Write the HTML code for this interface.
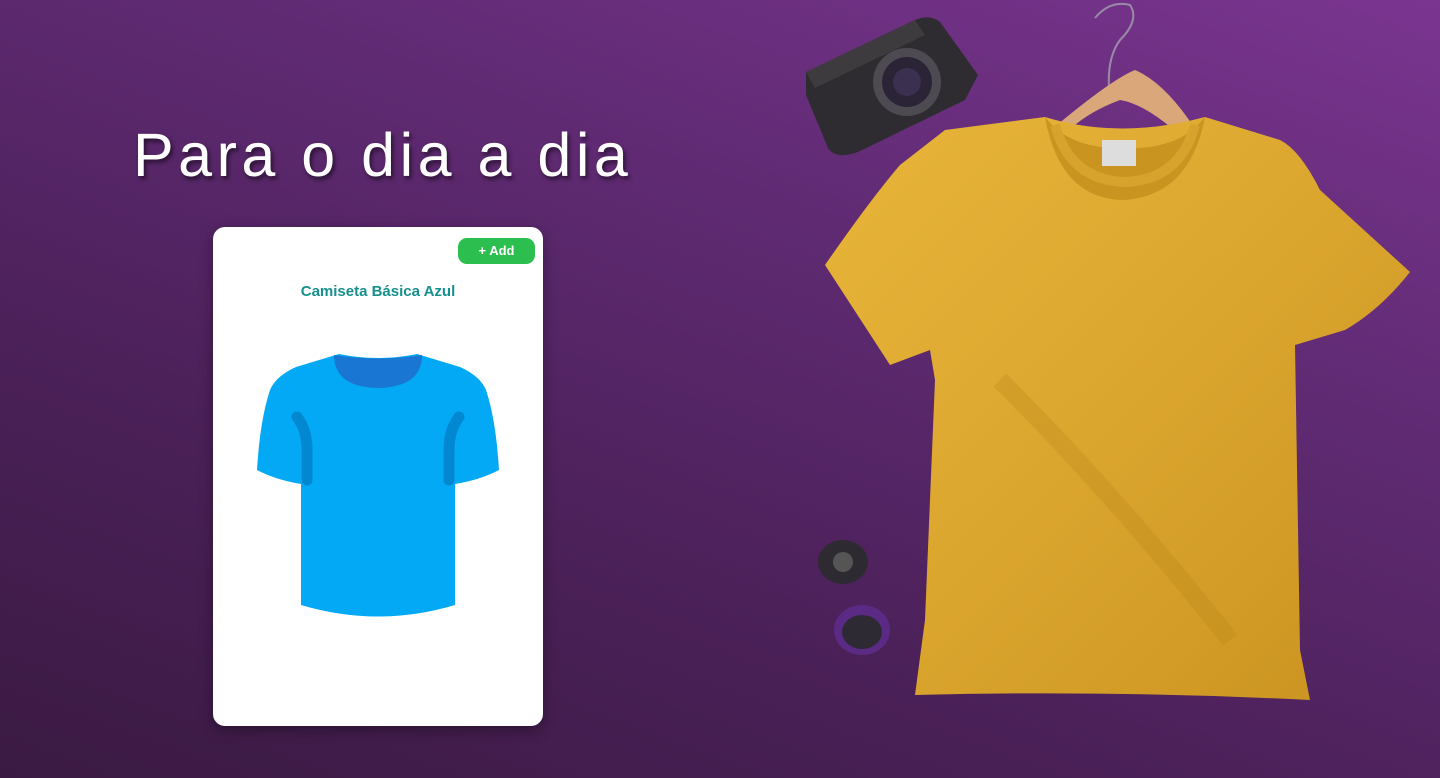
<!DOCTYPE html>
<html><head><meta charset="utf-8"><style>
html,body{margin:0;padding:0}
body{width:1440px;height:778px;overflow:hidden;position:relative;
background:linear-gradient(20deg,#3a1a42 0%,#4c215a 35%,#5f2a72 65%,#7a3590 100%);font-family:"Liberation Sans",sans-serif}
.title{position:absolute;left:133px;top:120px;font-family:"Liberation Sans",sans-serif;font-size:61px;color:#fff;letter-spacing:4.5px;text-shadow:2px 3px 4px rgba(0,0,0,.55);white-space:nowrap}
.card{position:absolute;left:213px;top:227px;width:330px;height:499px;background:#fff;border-radius:12px;box-shadow:0 4px 14px rgba(0,0,0,.35)}
.add{position:absolute;left:245px;top:11px;width:77px;height:26px;border-radius:9px;background:#2cbf4f;color:#fff;font-weight:bold;font-size:13px;text-align:center;line-height:26px}
.name{position:absolute;left:0;width:330px;top:56px;text-align:center;color:#16908d;font-weight:bold;font-size:15px}
svg{position:absolute}
</style></head><body>
<div class="title">Para o dia a dia</div>
<div class="card">
<div class="add">+ Add</div>
<div class="name">Camiseta Básica Azul</div>
</div>
<svg style="left:0;top:0" width="1440" height="778" viewBox="0 0 1440 778">
<path d="M339 354 Q378 362 417 354 L460 367 Q480 376 486 390 Q496 420 499 470 Q480 480 455 484 L455 605 Q378 628 301 605 L301 484 Q276 480 257 470 Q260 420 270 390 Q276 376 296 367 Z" fill="#03a9f4"/>
<path d="M334 355 Q378 362 422 355 Q422 387 378 388 Q334 387 334 355Z" fill="#1976d2"/>
<path d="M297 417 Q307 430 307 450 L307 480" stroke="#0288d1" stroke-width="11" stroke-linecap="round" fill="none"/>
<path d="M459 417 Q449 430 449 450 L449 480" stroke="#0288d1" stroke-width="11" stroke-linecap="round" fill="none"/>
<path d="M1110 100 Q1105 60 1120 40 Q1140 20 1130 5 Q1110 0 1095 18" stroke="#9a8aa8" stroke-width="2" fill="none"/>
<path d="M1045 135 Q1110 80 1135 70 Q1170 85 1205 145 L1190 145 Q1150 105 1120 100 Q1080 115 1060 140Z" fill="#d9a77a"/>
<path d="M806 72 L915 20 Q930 14 940 22 L978 75 L965 100 L858 152 Q836 160 828 148 L806 95 Z" fill="#2e2c30"/>
<path d="M806 72 L915 20 L925 35 L815 88Z" fill="#3e3b3f"/>
<circle cx="907" cy="82" r="34" fill="#4d4a52"/><circle cx="907" cy="82" r="25" fill="#2a2436"/><circle cx="907" cy="82" r="14" fill="#3b3050"/>
<ellipse cx="843" cy="562" rx="25" ry="22" fill="#2e2a32"/><circle cx="843" cy="562" r="10" fill="#555"/>
<ellipse cx="862" cy="630" rx="28" ry="25" fill="#5a2a85"/><ellipse cx="862" cy="632" rx="20" ry="17" fill="#2e2a34"/>
<defs><linearGradient id="y" x1="0" y1="0" x2="1" y2="1"><stop offset="0" stop-color="#e8b53a"/><stop offset=".5" stop-color="#dba62e"/><stop offset="1" stop-color="#c9921f"/></linearGradient></defs>
<path d="M1045 117 Q1120 140 1205 117 L1280 140 Q1300 150 1320 190 L1410 272 Q1380 310 1345 330 L1295 345 L1300 650 L1310 700 Q1110 690 915 695 L925 620 L935 380 L930 350 L890 365 L825 265 Q870 200 900 165 L945 130 Z" fill="url(#y)"/>
<path d="M1045 117 Q1060 200 1125 200 Q1190 195 1205 117 Q1180 150 1125 148 Q1070 150 1045 117Z" fill="#c99420"/>
<path d="M1055 125 Q1070 180 1125 182 Q1180 180 1195 125" stroke="#d8a32c" stroke-width="10" fill="none"/>
<rect x="1102" y="140" width="34" height="26" fill="#ddd"/>
<path d="M1000 380 Q1120 500 1230 640" stroke="#b88418" stroke-width="18" fill="none" opacity=".3"/>
</svg>
</body></html>
